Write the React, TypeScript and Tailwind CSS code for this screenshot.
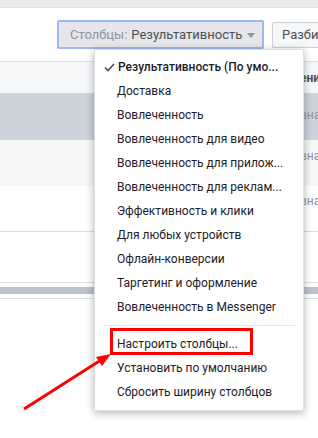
const presets = [
  "Доставка",
  "Вовлеченность",
  "Вовлеченность для видео",
  "Вовлеченность для прилож...",
  "Вовлеченность для реклам...",
  "Эффективность и клики",
  "Для любых устройств",
  "Офлайн-конверсии",
  "Таргетинг и оформление",
  "Вовлеченность в Messenger",
];

const actions = ["Настроить столбцы...", "Установить по умолчанию", "Сбросить ширину столбцов"];

function Cell({ pt, children }: { pt: string; children?: React.ReactNode }) {
  return <div className={`w-[40px] overflow-hidden whitespace-nowrap text-[#90949c] ${pt}`}>{children}</div>;
}

export default function App() {
  return (
    <div
      className="relative w-[318px] h-[438px] overflow-hidden bg-white text-[12px] text-[#1d2129]"
      style={{ fontFamily: "Roboto, 'Liberation Sans', sans-serif" }}
    >
      <div className="h-[8px] bg-[#e9ebee] border-b border-[#dddfe2]" />

      {/* toolbar */}
      <div className="flex items-start h-[53px] pt-[12px]">
        <div className="w-[57px]" />
        <div className="flex items-center h-[29px] w-[207px] pl-[11px] rounded-[2px] border-2 border-[#9bb9f2] bg-[#e4e6ea] whitespace-nowrap text-[13px]">
          <span className="text-[#90949c]">Столбцы:</span>
          <span className="ml-[4px] text-[#4b4f56]">Результативность</span>
          <span className="ml-[5px] mt-[1px] w-0 h-0 border-l-[4px] border-r-[4px] border-t-[5px] border-l-transparent border-r-transparent border-t-[#90949c]" />
        </div>
        <div className="ml-[8px] mt-[2px] h-[26px] flex-1 flex items-center pl-[9px] border border-[#ccd0d5] border-r-0 rounded-l-[2px] bg-[#f6f7f9] text-[13px] text-[#4b4f56] whitespace-nowrap overflow-hidden">
          Разбивка
        </div>
      </div>

      {/* table */}
      <div className="border-t border-[#dddfe2]">
        <div className="flex h-[31px] bg-[#f6f7f9]">
          <div className="flex-1" />
          <div className="w-[40px] overflow-hidden whitespace-nowrap pt-[7px] font-bold text-[#4b4f56]">
            <span className="-ml-[15px]">Изменения</span>
          </div>
        </div>
        <div className="flex h-[47px] bg-[#ccd3db]">
          <div className="flex-1" />
          <Cell pt="pt-[13px]">
            <span className="-ml-[5px]">Активна</span>
          </Cell>
        </div>
        <div className="flex h-[46px] bg-[#f5f6f7]">
          <div className="flex-1" />
          <Cell pt="pt-[7px]">
            <span className="-ml-[5px]">Активна</span>
          </Cell>
        </div>
        <div className="flex h-[46px] bg-white border-b border-[#dddfe2]">
          <div className="flex-1" />
          <Cell pt="pt-[6px]">
            <span className="-ml-[5px]">Активна</span>
          </Cell>
        </div>
        <div className="h-[51px] bg-white border-b border-[#dddfe2]" />
        <div className="h-[16px] pt-[4px] border-b border-[#dddfe2]">
          <div className="h-[7px] bg-[#bec2c9]" />
        </div>
      </div>

      {/* dropdown menu */}
      <div className="absolute left-[94px] top-[49px] w-[210px] bg-white pt-[5px] pb-[6px] shadow-[0_2px_8px_rgba(0,0,0,0.3)] border border-[#dddfe2]">
        <div className="flex items-center h-[24px] pl-[9px] whitespace-nowrap font-medium text-[#1d2129]">
          <svg width="11" height="9" viewBox="0 0 11 9" className="mr-[3px]">
            <path d="M1 4.5 L4 7.5 L10 1" fill="none" stroke="#4b4f56" strokeWidth="1.6" />
          </svg>
          Результативность (По умо...
        </div>
        {presets.map((p) => (
          <div key={p} className="flex items-center h-[24px] pl-[22px] whitespace-nowrap text-[#1d2129]">
            {p}
          </div>
        ))}
        <div className="mx-[8px] my-[6px] border-t border-[#e5e5e5]" />
        {actions.map((p) => (
          <div key={p} className="flex items-center h-[24px] pl-[22px] whitespace-nowrap text-[#1d2129]">
            {p}
          </div>
        ))}
      </div>

      {/* annotation */}
      <div className="absolute left-[110px] top-[328px] w-[143px] h-[27px] border-[3px] border-[#ff0000]" />
      <svg className="absolute left-0 top-0" width="318" height="438">
        <line x1="24" y1="409" x2="101" y2="360" stroke="#ff0000" strokeWidth="3" />
        <polygon points="111,354 102,366 96,357" fill="#ff0000" />
      </svg>
    </div>
  );
}
